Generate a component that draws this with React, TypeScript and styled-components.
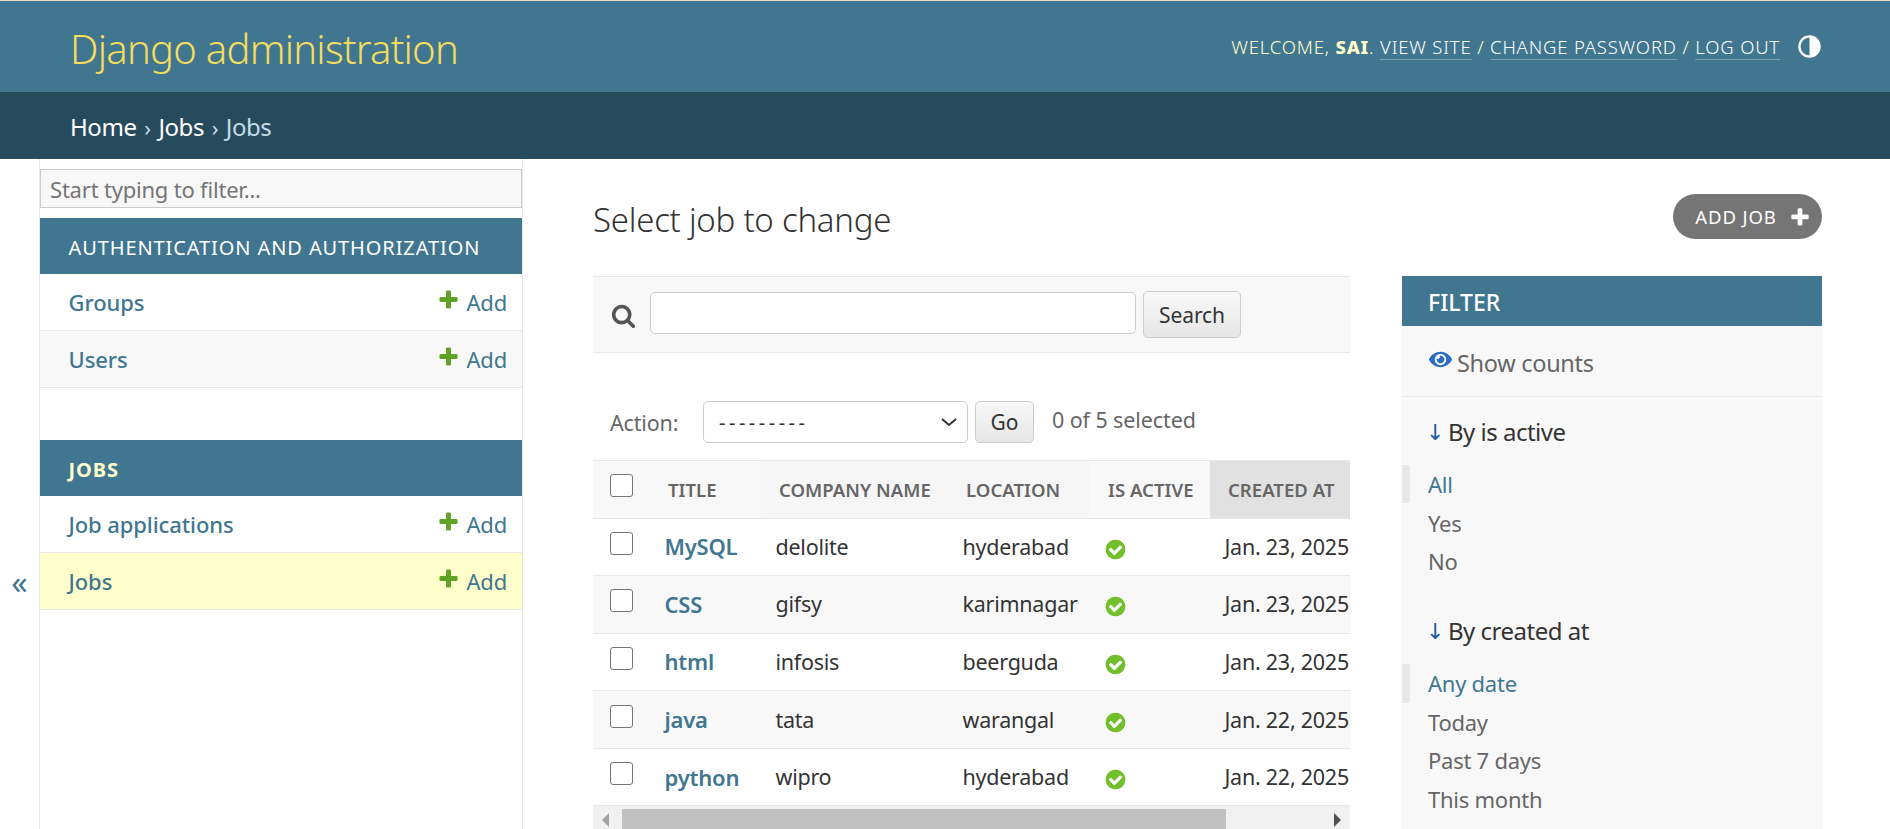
import React from "react";
import styled, { createGlobalStyle } from "styled-components";
import { FaEye } from "react-icons/fa";

const FONT = `"Noto Sans", "Open Sans", "Liberation Sans", sans-serif`;

const PLUS =
  "M1600 796v192q0 40-28 68t-68 28h-416v416q0 40-28 68t-68 28h-192q-40 0-68-28t-28-68v-416h-416q-40 0-68-28t-28-68v-192q0-40 28-68t68-28h416v-416q0-40 28-68t68-28h192q40 0 68 28t28 68v416h416q40 0 68 28t28 68z";
const CHECK =
  "M1412 734q0-28-18-46l-91-90q-19-19-45-19t-45 19l-408 407-226-226q-19-19-45-19t-45 19l-91 90q-18 18-18 46 0 27 18 45l362 362q19 19 45 19 27 0 46-19l543-543q18-18 18-45zm252 162q0 209-103 385.500t-279.500 279.500-385.500 103-385.500-103-279.500-279.500-103-385.500 103-385.500 279.500-279.500 385.500-103 385.500 103 279.500 279.500 103 385.500z";
const SEARCH =
  "M1216 832q0-185-131.500-316.500t-316.500-131.500-316.500 131.500-131.500 316.500 131.500 316.500 316.500 131.500 316.500-131.500 131.500-316.500zm512 832q0 52-38 90t-90 38q-54 0-90-38l-343-342q-179 124-399 124-143 0-273.500-55.500t-225-150-150-225-55.500-273.500 55.500-273.500 150-225 225-150 273.500-55.500 273.500 55.500 225 150 150 225 55.500 273.500q0 220-124 399l343 343q37 37 37 90z";

const GlobalStyle = createGlobalStyle`
  html, body {
    margin: 0;
    padding: 0;
    background: #fff;
    overflow: hidden;
  }
  * { box-sizing: border-box; }
`;

const Page = styled.div`
  width: 1890px;
  height: 829px;
  overflow: hidden;
  display: flex;
  flex-direction: column;
  font-family: ${FONT};
  font-size: 21.5px;
  color: #333;
  border-top: 1px solid #e9dcc0;
`;

const Header = styled.header`
  height: 91px;
  flex: none;
  background: #417690;
  display: flex;
  align-items: center;
  justify-content: space-between;
  padding: 0 69px 0 70px;
`;

const Branding = styled.h1`
  margin: 4px 0 0;
  font-size: 40px;
  font-weight: 300;
  letter-spacing: -0.75px;
  color: #f5dd5d;
`;

const UserTools = styled.div`
  display: flex;
  align-items: center;
  font-size: 18.5px;
  font-weight: 300;
  letter-spacing: 0.82px;
  text-transform: uppercase;
  color: #ffc;
  white-space: pre;
  strong {
    font-weight: 800;
  }
`;

const ToolLink = styled.span`
  color: #fff;
  border-bottom: 1px solid rgba(255, 255, 255, 0.3);
`;

const ThemeIcon = styled.svg`
  width: 23px;
  height: 23px;
  margin-left: 18px;
`;

const Breadcrumbs = styled.nav`
  height: 67px;
  flex: none;
  background: #264b5d;
  display: flex;
  align-items: center;
  padding: 2px 0 0 70px;
  font-size: 24px;
  letter-spacing: -0.45px;
  color: #c4dce8;
  white-space: pre;
`;

const Crumb = styled.span`
  color: #fff;
`;

const CrumbSep = styled.span`
  margin: 0 2.5px;
  font-size: 22px;
  color: #c4dce8;
`;

const Body = styled.div`
  flex: 1;
  min-height: 0;
  display: flex;
`;

const ToggleColumn = styled.div`
  width: 40px;
  flex: none;
  border-right: 1px solid #e8e8e8;
  display: flex;
  justify-content: center;
  padding-top: 403px;
  color: #417690;
  font-size: 32px;
  line-height: 40px;
`;

const Sidebar = styled.aside`
  width: 483px;
  flex: none;
  border-right: 1px solid #e8e8e8;
  padding-top: 10px;
`;

const FilterInput = styled.div`
  height: 39px;
  margin-bottom: 10px;
  background: #f8f8f8;
  border: 1px solid #ccc;
  padding-left: 9px;
  display: flex;
  align-items: center;
  font-size: 22px;
  letter-spacing: -0.2px;
  color: #757575;
`;

const AppCaption = styled.div<{ $current?: boolean }>`
  height: 56px;
  background: #417690;
  display: flex;
  align-items: center;
  padding: 2px 0 0 28.5px;
  font-size: 20px;
  letter-spacing: 0.9px;
  text-transform: uppercase;
  font-weight: ${(p) => (p.$current ? 700 : 400)};
  color: ${(p) => (p.$current ? "#ffc" : "#fff")};
`;

const ModelRow = styled.div<{ $bg: string }>`
  height: 57px;
  border-bottom: 1px solid #e8e8e8;
  background: ${(p) => p.$bg};
  display: flex;
  align-items: center;
  justify-content: space-between;
  padding: 0 15px 0 28.5px;
  color: #417690;
`;

const ModelName = styled.span`
  font-weight: 500;
  font-size: 22px;
  letter-spacing: -0.1px;
`;

const AddLink = styled.span`
  display: flex;
  align-items: center;
  gap: 6px;
  font-size: 22px;
  letter-spacing: -0.2px;
`;

const PlusIcon = styled.svg`
  width: 23px;
  height: 23px;
  fill: #5fa225;
  margin-top: -6px;
`;

const AppGap = styled.div`
  height: 52px;
`;

const Main = styled.main`
  flex: 1;
  min-width: 0;
  padding: 34px 68px 0 70px;
`;

const TitleRow = styled.div`
  height: 47px;
  margin-bottom: 36px;
  display: flex;
  align-items: center;
  justify-content: space-between;
`;

const PageTitle = styled.h1`
  margin: 0;
  font-size: 33px;
  font-weight: 300;
  letter-spacing: -0.25px;
  color: #333;
  transform: translateY(3px);
`;

const AddButton = styled.div`
  width: 149px;
  height: 45px;
  border-radius: 23px;
  background: #757575;
  color: #fff;
  display: flex;
  align-items: center;
  justify-content: center;
  gap: 12px;
  padding-left: 11px;
  font-size: 18.5px;
  letter-spacing: 0.9px;
  font-weight: 400;
  text-transform: uppercase;
`;

const ButtonPlus = styled.svg`
  width: 22px;
  height: 22px;
  fill: #fff;
`;

const Columns = styled.div`
  display: flex;
  justify-content: space-between;
  align-items: flex-start;
`;

const ChangeList = styled.div`
  width: 757px;
`;

const SearchBar = styled.div`
  height: 77px;
  background: #f8f8f8;
  border-top: 1px solid #e8e8e8;
  border-bottom: 1px solid #e8e8e8;
  display: flex;
  align-items: center;
  padding-left: 18px;
`;

const SearchIcon = styled.svg`
  width: 25px;
  height: 25px;
  fill: #555;
  margin-right: 14px;
  margin-top: 2px;
`;

const SearchInput = styled.div`
  width: 486px;
  height: 42px;
  background: #fff;
  border: 1px solid #ccc;
  border-radius: 5px;
  margin-top: -3px;
`;

const GreyButton = styled.div<{ $w: number; $h: number }>`
  width: ${(p) => p.$w}px;
  height: ${(p) => p.$h}px;
  border: 1px solid #ccc;
  border-radius: 5px;
  background: linear-gradient(#f8f8f8, #e6e6e6);
  display: flex;
  align-items: center;
  justify-content: center;
  font-size: 21px;
  letter-spacing: -0.1px;
  color: #333;
`;

const SearchButton = styled(GreyButton)`
  margin-left: 7px;
`;

const Actions = styled.div`
  height: 107px;
  display: flex;
  align-items: flex-end;
  padding: 0 0 17px 17px;
  color: #666;
`;

const ActionLabel = styled.span`
  width: 93px;
  letter-spacing: -0.15px;
  align-self: flex-end;
  padding-bottom: 6px;
`;

const ActionSelect = styled.div`
  width: 265px;
  height: 42px;
  border: 1px solid #ccc;
  border-radius: 5px;
  background: #fff;
  display: flex;
  align-items: center;
  justify-content: space-between;
  padding: 0 9px 0 15px;
  color: #333;
  font-size: 20px;
  letter-spacing: 3.5px;
`;

const GoButton = styled(GreyButton)`
  margin-left: 7px;
`;

const Counter = styled.span`
  margin-left: 18px;
  letter-spacing: -0.1px;
  padding-bottom: 9px;
`;

const TableClip = styled.div`
  overflow: hidden;
  border-top: 1px solid #e8e8e8;
`;

const Table = styled.table`
  width: 900px;
  table-layout: fixed;
  border-collapse: collapse;
`;

const Th = styled.th<{ $bg?: string }>`
  height: 57px;
  padding: 0 0 0 18px;
  background: ${(p) => p.$bg || "#f8f8f8"};
  border-bottom: 1px solid #e8e8e8;
  text-align: left;
  font-size: 18.5px;
  font-weight: 600;
  letter-spacing: 0.05px;
  text-transform: uppercase;
  color: #666;
`;

const Tr = styled.tr<{ $alt: boolean }>`
  background: ${(p) => (p.$alt ? "#f8f8f8" : "#fff")};
`;

const Td = styled.td`
  height: 57.6px;
  padding: 0 0 1px 14.5px;
  border-bottom: 1px solid #e8e8e8;
  white-space: nowrap;
  letter-spacing: -0.25px;
  color: #333;
`;

const TitleLink = styled.span`
  color: #417690;
  font-weight: 600;
  font-size: 22px;
  letter-spacing: -0.2px;
`;

const CheckCell = styled.td`
  padding: 0 0 7px 17px;
  border-bottom: 1px solid #e8e8e8;
`;

const HeadCheckCell = styled.th`
  padding: 0 0 7px 17px;
  background: #f8f8f8;
  border-bottom: 1px solid #e8e8e8;
  text-align: left;
`;

const Checkbox = styled.div`
  width: 23px;
  height: 23px;
  border: 1.5px solid #767676;
  border-radius: 3px;
  background: #fff;
`;

const YesIcon = styled.svg`
  display: block;
  width: 23px;
  height: 23px;
  fill: #70bf2b;
  margin: 6px 0 0 -0.5px;
`;

const Scrollbar = styled.div`
  height: 24px;
  background: #f1f1f1;
  display: flex;
  align-items: flex-end;
  justify-content: space-between;
  padding: 0 9px;
  position: relative;
`;

const ScrollThumb = styled.div`
  position: absolute;
  left: 29px;
  bottom: 0;
  width: 604px;
  height: 21px;
  background: #c1c1c1;
`;

const ScrollArrow = styled.svg<{ $color: string }>`
  width: 7px;
  height: 14px;
  fill: ${(p) => p.$color};
  margin-bottom: 3px;
`;

const FilterPanel = styled.aside`
  width: 420px;
  height: 560px;
  background: #f8f8f8;
  flex: none;
`;

const FilterTitle = styled.div`
  height: 50px;
  background: #417690;
  color: #fff;
  display: flex;
  align-items: center;
  padding: 1px 0 0 26px;
  font-size: 23px;
  font-weight: 500;
`;

const ShowCounts = styled.div`
  height: 71px;
  border-bottom: 1px solid #e8e8e8;
  display: flex;
  align-items: center;
  gap: 5px;
  padding: 3px 0 0 27px;
  color: #666;
  font-size: 23.5px;
  letter-spacing: -0.3px;
  svg {
    width: 23px;
    height: 23px;
    color: #2a6ec4;
    margin-top: -7px;
  }
`;

const FilterHeading = styled.div<{ $top: number }>`
  margin-top: ${(p) => p.$top}px;
  height: 30px;
  display: flex;
  align-items: center;
  padding-left: 26px;
  font-size: 24px;
  letter-spacing: -0.5px;
  color: #333;
  margin-bottom: 18px;
  transform: translateY(-1px);
`;

const SortArrow = styled.span`
  color: #1c5a9e;
  margin: 2px 4px 0 -2px;
  font-family: "DejaVu Sans", sans-serif;
  font-size: 22px;
`;

const FilterOption = styled.div<{ $selected?: boolean }>`
  height: 38.4px;
  display: flex;
  align-items: center;
  padding-left: ${(p) => (p.$selected ? 18 : 26)}px;
  border-left: ${(p) => (p.$selected ? "8px solid #e8e8e8" : "none")};
  color: ${(p) => (p.$selected ? "#417690" : "#666")};
  font-size: 22px;
  letter-spacing: -0.25px;
`;

type Job = { title: string; company: string; location: string; created: string };

const jobs: Job[] = [
  { title: "MySQL", company: "delolite", location: "hyderabad", created: "Jan. 23, 2025" },
  { title: "CSS", company: "gifsy", location: "karimnagar", created: "Jan. 23, 2025" },
  { title: "html", company: "infosis", location: "beerguda", created: "Jan. 23, 2025" },
  { title: "java", company: "tata", location: "warangal", created: "Jan. 22, 2025" },
  { title: "python", company: "wipro", location: "hyderabad", created: "Jan. 22, 2025" },
];

const AddAction = () => (
  <AddLink>
    <PlusIcon viewBox="0 0 1792 1792">
      <path d={PLUS} />
    </PlusIcon>
    Add
  </AddLink>
);

export default function App() {
  return (
    <Page>
      <GlobalStyle />
      <Header>
        <Branding>Django administration</Branding>
        <UserTools>
          Welcome, <strong>SAI</strong>.{" "}
          <ToolLink>View site</ToolLink> / <ToolLink>Change password</ToolLink> / <ToolLink>Log out</ToolLink>
          <ThemeIcon viewBox="0 0 24 24">
            <circle cx="12" cy="12" r="10.5" fill="none" stroke="#fff" strokeWidth="2.4" />
            <path d="M12 2a10 10 0 0 1 0 20z" fill="#fff" />
          </ThemeIcon>
        </UserTools>
      </Header>
      <Breadcrumbs>
        <Crumb>Home</Crumb>
        <CrumbSep> › </CrumbSep>
        <Crumb>Jobs</Crumb>
        <CrumbSep> › </CrumbSep>
        Jobs
      </Breadcrumbs>
      <Body>
        <ToggleColumn>«</ToggleColumn>
        <Sidebar>
          <FilterInput>Start typing to filter...</FilterInput>
          <AppCaption>Authentication and Authorization</AppCaption>
          <ModelRow $bg="#fff">
            <ModelName>Groups</ModelName>
            <AddAction />
          </ModelRow>
          <ModelRow $bg="#f8f8f8">
            <ModelName>Users</ModelName>
            <AddAction />
          </ModelRow>
          <AppGap />
          <AppCaption $current>Jobs</AppCaption>
          <ModelRow $bg="#fff">
            <ModelName>Job applications</ModelName>
            <AddAction />
          </ModelRow>
          <ModelRow $bg="#ffc">
            <ModelName>Jobs</ModelName>
            <AddAction />
          </ModelRow>
        </Sidebar>
        <Main>
          <TitleRow>
            <PageTitle>Select job to change</PageTitle>
            <AddButton>
              Add job
              <ButtonPlus viewBox="0 0 1792 1792">
                <path d={PLUS} />
              </ButtonPlus>
            </AddButton>
          </TitleRow>
          <Columns>
            <ChangeList>
              <SearchBar>
                <SearchIcon viewBox="0 0 1792 1792">
                  <path d={SEARCH} />
                </SearchIcon>
                <SearchInput />
                <SearchButton $w={98} $h={47}>Search</SearchButton>
              </SearchBar>
              <Actions>
                <ActionLabel>Action:</ActionLabel>
                <ActionSelect>
                  ---------
                  <svg width="18" height="10" viewBox="0 0 18 10">
                    <path d="M2 2l7 6 7-6" fill="none" stroke="#333" strokeWidth="2" />
                  </svg>
                </ActionSelect>
                <GoButton $w={59} $h={42}>Go</GoButton>
                <Counter>0 of 5 selected</Counter>
              </Actions>
              <TableClip>
                <Table>
                  <colgroup>
                    <col width={57} />
                    <col width={111} />
                    <col width={187} />
                    <col width={142} />
                    <col width={120} />
                    <col width={283} />
                  </colgroup>
                  <thead>
                    <tr>
                      <HeadCheckCell>
                        <Checkbox />
                      </HeadCheckCell>
                      <Th>Title</Th>
                      <Th $bg="#f6f6f6">Company name</Th>
                      <Th $bg="#f6f6f6">Location</Th>
                      <Th>Is active</Th>
                      <Th $bg="#e1e1e1">Created at</Th>
                    </tr>
                  </thead>
                  <tbody>
                    {jobs.map((job, i) => (
                      <Tr key={job.title} $alt={i % 2 === 1}>
                        <CheckCell>
                          <Checkbox />
                        </CheckCell>
                        <Td>
                          <TitleLink>{job.title}</TitleLink>
                        </Td>
                        <Td>{job.company}</Td>
                        <Td>{job.location}</Td>
                        <Td>
                          <YesIcon viewBox="0 0 1792 1792">
                            <path d={CHECK} />
                          </YesIcon>
                        </Td>
                        <Td>{job.created}</Td>
                      </Tr>
                    ))}
                  </tbody>
                </Table>
              </TableClip>
              <Scrollbar>
                <ScrollThumb />
                <ScrollArrow $color="#a3a3a3" viewBox="0 0 7 14">
                  <path d="M7 0v14L0 7z" />
                </ScrollArrow>
                <ScrollArrow $color="#505050" viewBox="0 0 7 14">
                  <path d="M0 0v14l7-7z" />
                </ScrollArrow>
              </Scrollbar>
            </ChangeList>
            <FilterPanel>
              <FilterTitle>FILTER</FilterTitle>
              <ShowCounts>
                <FaEye />
                Show counts
              </ShowCounts>
              <FilterHeading $top={20}>
                <SortArrow>↓</SortArrow>By is active
              </FilterHeading>
              <FilterOption $selected>All</FilterOption>
              <FilterOption>Yes</FilterOption>
              <FilterOption>No</FilterOption>
              <FilterHeading $top={36}>
                <SortArrow>↓</SortArrow>By created at
              </FilterHeading>
              <FilterOption $selected>Any date</FilterOption>
              <FilterOption>Today</FilterOption>
              <FilterOption>Past 7 days</FilterOption>
              <FilterOption>This month</FilterOption>
            </FilterPanel>
          </Columns>
        </Main>
      </Body>
    </Page>
  );
}
